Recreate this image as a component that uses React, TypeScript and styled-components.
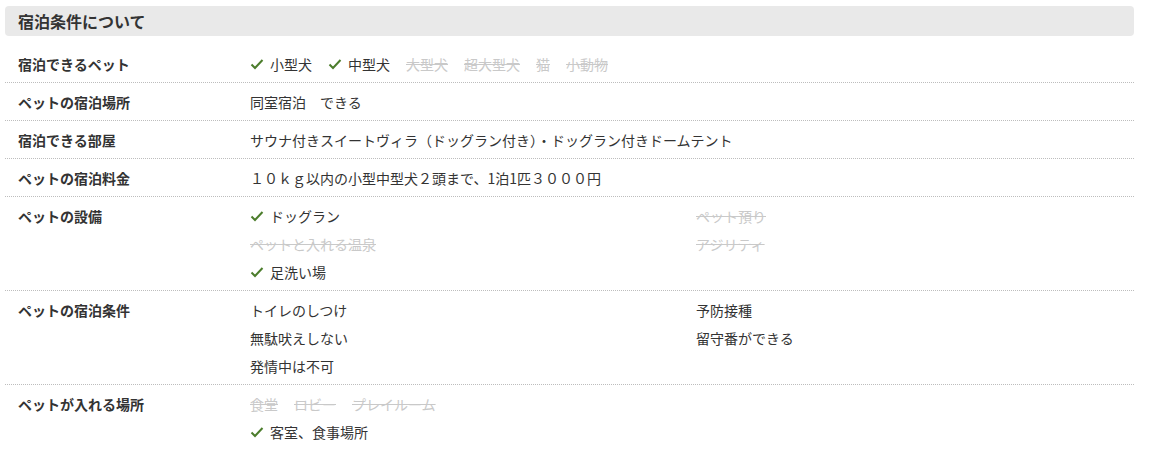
import styled, { createGlobalStyle } from 'styled-components';

const GlobalStyle = createGlobalStyle`
    body {
        margin: 0;
        background: #fff;
        font-family: "Noto Sans CJK JP", "Noto Sans", sans-serif;
        color: #333;
    }
`;

const Section = styled.section`
    padding: 6px 16px 0 5px;
`;

const Heading = styled.h2`
    margin: 0 0 9px;
    height: 30px;
    display: flex;
    align-items: center;
    padding: 0 13px;
    background: #e9e9e9;
    border-radius: 4px;
    font-size: 16px;
    font-weight: bold;
    color: #333;
`;

const Row = styled.div<{ $last?: boolean }>`
    display: grid;
    grid-template-columns: 232px 1fr;
    padding: 10px 0 9px 13px;
    border-bottom: ${p => (p.$last ? 'none' : '1px dotted #bdbdbd')};
    font-size: 14px;
    line-height: 18px;
`;

const Label = styled.div`
    font-weight: bold;
    color: #333;
`;

const Lines = styled.div`
    display: flex;
    flex-direction: column;
    gap: 10px;
`;

const Inline = styled.div`
    display: flex;
    flex-wrap: wrap;
    column-gap: 16px;
`;

const TwoCols = styled.div`
    display: grid;
    grid-template-columns: 446px 1fr;
    grid-auto-rows: 18px;
    row-gap: 10px;
`;

const Item = styled.span<{ $off?: boolean }>`
    display: inline-flex;
    align-items: center;
    height: 18px;
    vertical-align: top;
    color: ${p => (p.$off ? '#c9c9c9' : '#333')};
    text-decoration: ${p => (p.$off ? 'line-through' : 'none')};
`;

const Check = styled.svg`
    width: 14px;
    height: 14px;
    margin-right: 6px;
    flex-shrink: 0;
`;

const CheckIcon = () => (
    <Check viewBox="0 0 14 14">
        <path d="M1.5 7.5 L5 11 L12.5 3" fill="none" stroke="#4c7d2c" strokeWidth="2" />
    </Check>
);

type Opt = { name: string; ok: boolean };

const Option = ({ name, ok }: Opt) => (
    <Item $off={!ok}>
        {ok && <CheckIcon />}
        {name}
    </Item>
);

const pets: Opt[] = [
    { name: '小型犬', ok: true },
    { name: '中型犬', ok: true },
    { name: '大型犬', ok: false },
    { name: '超大型犬', ok: false },
    { name: '猫', ok: false },
    { name: '小動物', ok: false },
];

const facilities: Opt[] = [
    { name: 'ドッグラン', ok: true },
    { name: 'ペット預り', ok: false },
    { name: 'ペットと入れる温泉', ok: false },
    { name: 'アジリティ', ok: false },
    { name: '足洗い場', ok: true },
];

const conditions = ['トイレのしつけ', '予防接種', '無駄吠えしない', '留守番ができる', '発情中は不可'];

const places: Opt[] = [
    { name: '食堂', ok: false },
    { name: 'ロビー', ok: false },
    { name: 'プレイルーム', ok: false },
];

const App = () => (
    <>
        <GlobalStyle />
        <Section>
            <Heading>宿泊条件について</Heading>

            <Row>
                <Label>宿泊できるペット</Label>
                <Inline>
                    {pets.map(p => <Option key={p.name} {...p} />)}
                </Inline>
            </Row>

            <Row>
                <Label>ペットの宿泊場所</Label>
                <div>同室宿泊　できる</div>
            </Row>

            <Row>
                <Label>宿泊できる部屋</Label>
                <div>サウナ付きスイートヴィラ（ドッグラン付き）・ドッグラン付きドームテント</div>
            </Row>

            <Row>
                <Label>ペットの宿泊料金</Label>
                <div>１０ｋｇ以内の小型中型犬２頭まで、1泊1匹３０００円</div>
            </Row>

            <Row>
                <Label>ペットの設備</Label>
                <TwoCols>
                    {facilities.map(f => <div key={f.name}><Option {...f} /></div>)}
                </TwoCols>
            </Row>

            <Row>
                <Label>ペットの宿泊条件</Label>
                <TwoCols>
                    {conditions.map(c => <div key={c}>{c}</div>)}
                </TwoCols>
            </Row>

            <Row $last>
                <Label>ペットが入れる場所</Label>
                <Lines>
                    <Inline>
                        {places.map(p => <Option key={p.name} {...p} />)}
                    </Inline>
                    <div><Option name="客室、食事場所" ok /></div>
                </Lines>
            </Row>
        </Section>
    </>
);

export default App;
